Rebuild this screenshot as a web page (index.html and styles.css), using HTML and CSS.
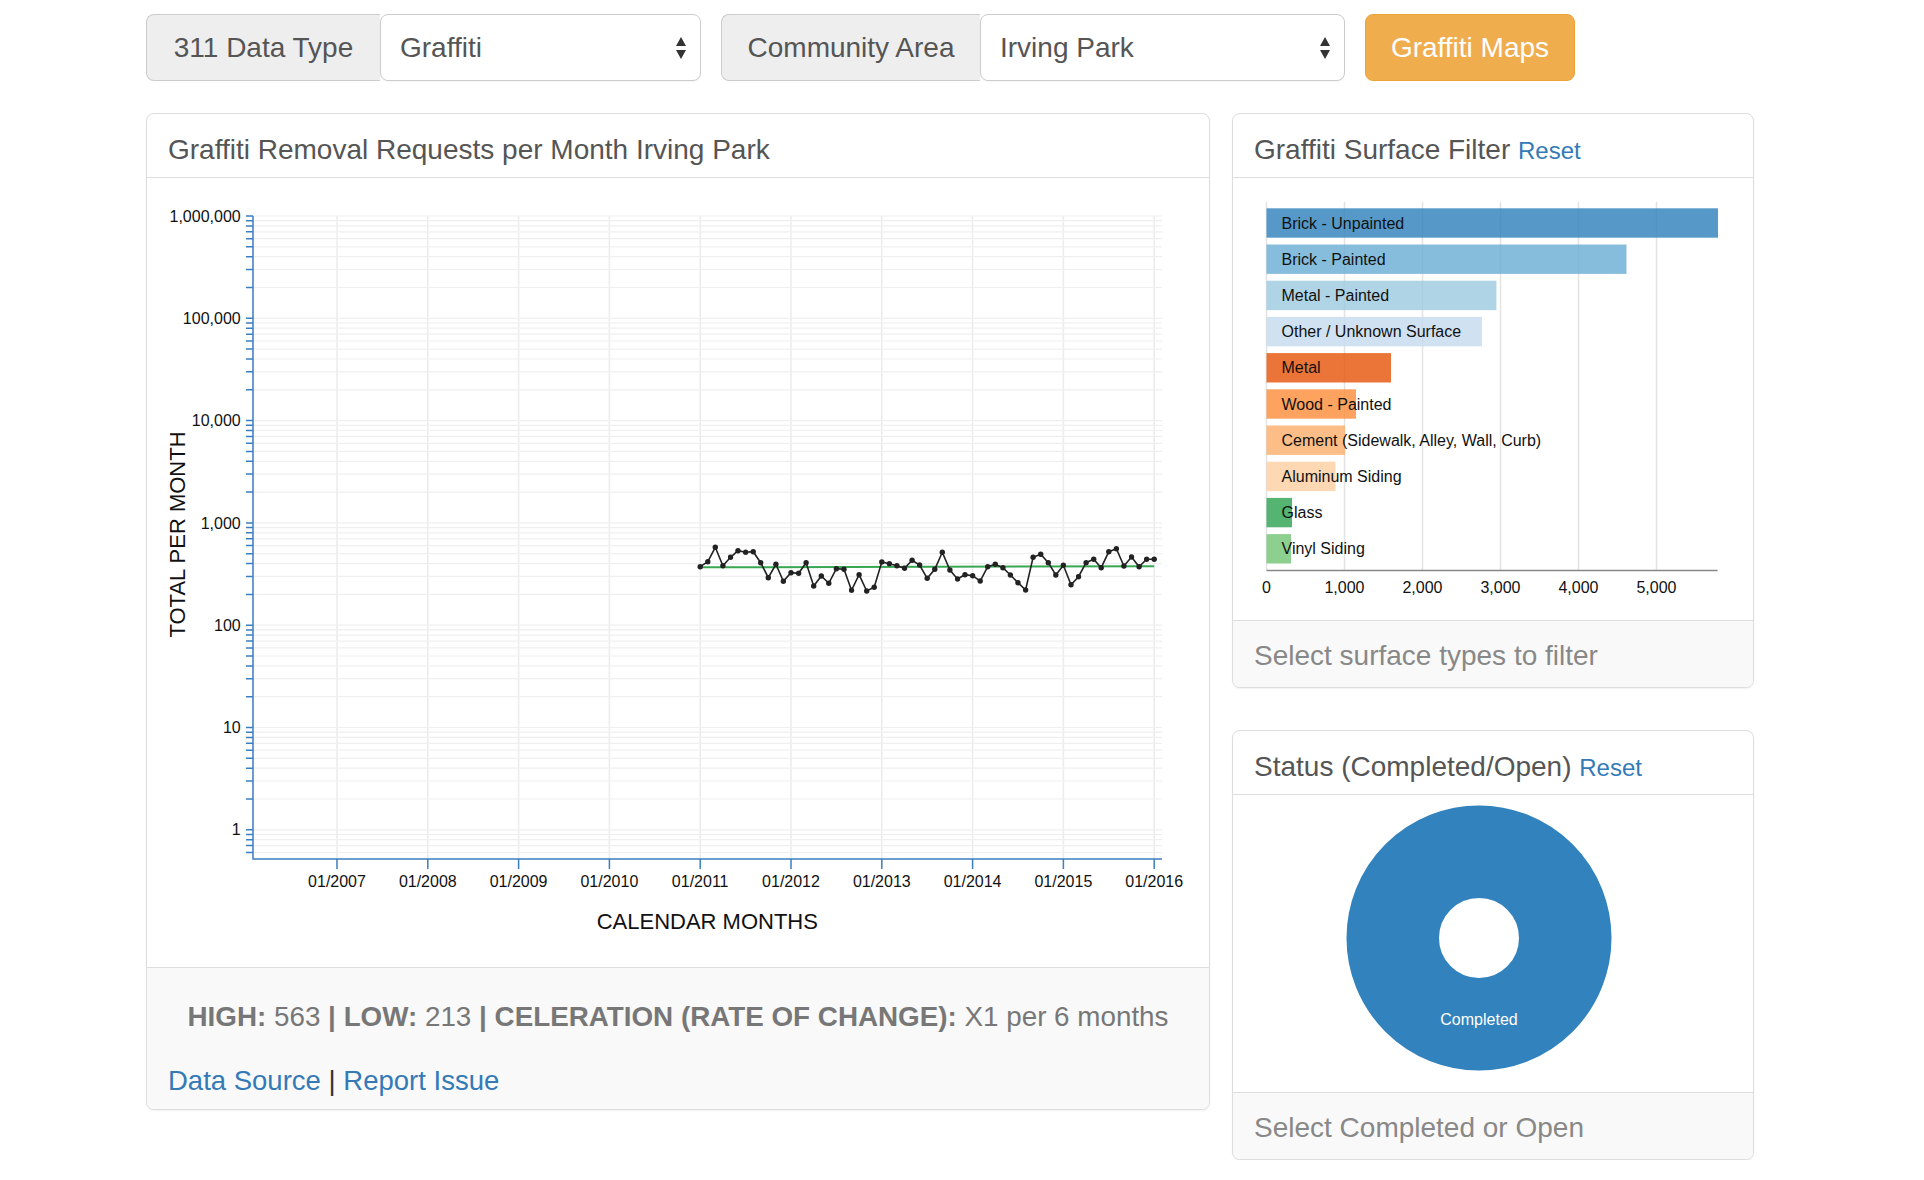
FILE: index.html
```html
<!DOCTYPE html>
<html lang="en">
<head>
<meta charset="utf-8">
<title>Graffiti Removal Requests</title>
<link rel="stylesheet" href="styles.css">
</head>
<body>
<div class="page">
  <div class="controls">
    <div class="input-group">
      <span class="addon addon-type">311 Data Type</span>
      <div class="select select-type">
        <span>Graffiti</span>
        <svg class="arrows" width="10" height="24" viewBox="0 0 10 24"><path d="M0 10L5 1L10 10Z M0 14L10 14L5 23Z"/></svg>
      </div>
    </div>
    <div class="input-group">
      <span class="addon addon-area">Community Area</span>
      <div class="select select-area">
        <span>Irving Park</span>
        <svg class="arrows" width="10" height="24" viewBox="0 0 10 24"><path d="M0 10L5 1L10 10Z M0 14L10 14L5 23Z"/></svg>
      </div>
    </div>
    <button class="btn-maps">Graffiti Maps</button>
  </div>

  <div class="row">
    <div class="col-main">
      <div class="panel panel-main">
        <div class="panel-heading">Graffiti Removal Requests per Month Irving Park</div>
        <div class="panel-body body-line">
          <svg class="chart" width="1062" height="789" viewBox="0 0 1062 789">
            <defs>
              <marker id="dot" viewBox="0 0 6 6" refX="3" refY="3" markerWidth="6" markerHeight="6" markerUnits="userSpaceOnUse">
                <circle cx="3" cy="3" r="2.7" fill="#222"/>
              </marker>
            </defs>
            <path class="grid-v" d="M190 38V681M280.8 38V681M371.6 38V681M462.4 38V681M553.2 38V681M644 38V681M734.8 38V681M825.6 38V681M916.4 38V681M1007.2 38V681"/>
            <path class="grid-h" d="M106 38H1015M106 42.7H1015M106 47.9H1015M106 53.85H1015M106 60.7H1015M106 68.8H1015M106 78.7H1015M106 91.5H1015M106 109.5H1015M106 140.3H1015M106 145H1015M106 150.2H1015M106 156.15H1015M106 163H1015M106 171.1H1015M106 181H1015M106 193.8H1015M106 211.8H1015M106 242.6H1015M106 247.3H1015M106 252.5H1015M106 258.45H1015M106 265.3H1015M106 273.4H1015M106 283.3H1015M106 296.1H1015M106 314.1H1015M106 344.9H1015M106 349.6H1015M106 354.8H1015M106 360.75H1015M106 367.6H1015M106 375.7H1015M106 385.6H1015M106 398.4H1015M106 416.4H1015M106 447.2H1015M106 451.9H1015M106 457.1H1015M106 463.05H1015M106 469.9H1015M106 478H1015M106 487.9H1015M106 500.7H1015M106 518.7H1015M106 549.5H1015M106 554.2H1015M106 559.4H1015M106 565.35H1015M106 572.2H1015M106 580.3H1015M106 590.2H1015M106 603H1015M106 621H1015M106 651.8H1015M106 656.5H1015M106 661.7H1015M106 667.6H1015M106 674.5H1015"/>
            <path class="axis" d="M106 38V681H1015"/>
            <path class="axis" d="M99 38H106M99 42.7H106M99 47.9H106M99 53.85H106M99 60.7H106M99 68.8H106M99 78.7H106M99 91.5H106M99 109.5H106M99 140.3H106M99 145H106M99 150.2H106M99 156.15H106M99 163H106M99 171.1H106M99 181H106M99 193.8H106M99 211.8H106M99 242.6H106M99 247.3H106M99 252.5H106M99 258.45H106M99 265.3H106M99 273.4H106M99 283.3H106M99 296.1H106M99 314.1H106M99 344.9H106M99 349.6H106M99 354.8H106M99 360.75H106M99 367.6H106M99 375.7H106M99 385.6H106M99 398.4H106M99 416.4H106M99 447.2H106M99 451.9H106M99 457.1H106M99 463.05H106M99 469.9H106M99 478H106M99 487.9H106M99 500.7H106M99 518.7H106M99 549.5H106M99 554.2H106M99 559.4H106M99 565.35H106M99 572.2H106M99 580.3H106M99 590.2H106M99 603H106M99 621H106M99 651.8H106M99 656.5H106M99 661.7H106M99 667.6H106M99 674.5H106"/>
            <path class="axis" d="M190 681V691M280.8 681V691M371.6 681V691M462.4 681V691M553.2 681V691M644 681V691M734.8 681V691M825.6 681V691M916.4 681V691M1007.2 681V691"/>
            <g class="tick-y">
              <text x="93.7" y="43.6">1,000,000</text>
              <text x="93.7" y="145.9">100,000</text>
              <text x="93.7" y="248.2">10,000</text>
              <text x="93.7" y="350.5">1,000</text>
              <text x="93.7" y="452.8">100</text>
              <text x="93.7" y="555.1">10</text>
              <text x="93.7" y="657.4">1</text>
            </g>
            <g class="tick-x">
              <text x="190" y="708.5">01/2007</text>
              <text x="280.8" y="708.5">01/2008</text>
              <text x="371.6" y="708.5">01/2009</text>
              <text x="462.4" y="708.5">01/2010</text>
              <text x="553.2" y="708.5">01/2011</text>
              <text x="644" y="708.5">01/2012</text>
              <text x="734.8" y="708.5">01/2013</text>
              <text x="825.6" y="708.5">01/2014</text>
              <text x="916.4" y="708.5">01/2015</text>
              <text x="1007.2" y="708.5">01/2016</text>
            </g>
            <text class="axis-title" x="560.3" y="751">CALENDAR MONTHS</text>
            <text class="axis-title" transform="translate(38 356.5) rotate(-90)">TOTAL PER MONTH</text>
            <path class="trend" d="M553.2 389.3L1007.2 388.3"/>
            <polyline class="series" points="553.2,388.7 560.8,383.7 568.3,369.3 575.9,387.7 583.5,379.3 591,372.7 598.6,374.3 606.2,373.7 613.7,384.7 621.3,399.7 628.9,386.3 636.4,403.3 644,394.7 651.6,395.3 659.1,384.7 666.7,408 674.3,398 681.8,405.3 689.4,390.7 697,391.3 704.5,412.3 712.1,396.7 719.7,413 727.2,409.3 734.8,384 742.4,385.7 749.9,387.7 757.5,390.3 765.1,382.3 772.6,387 780.2,400.3 787.8,391.3 795.3,374.3 802.9,392 810.5,401 818,396.7 825.6,397.7 833.2,403 840.7,388.7 848.3,386.3 855.9,389.7 863.4,397 871,404.7 878.6,412 886.1,379.3 893.7,376.3 901.3,384.7 908.8,397 916.4,387.3 924,406.7 931.5,398.7 939.1,384.7 946.7,381.3 954.2,389.7 961.8,373.7 969.4,370.7 976.9,388 984.5,379 992.1,388.7 999.6,381.3 1007.2,381.3"/>
          </svg>
        </div>
        <div class="panel-footer footer-main">
          <div class="stats"><b>HIGH:</b> 563 <b>|</b> <b>LOW:</b> 213 <b>|</b> <b>CELERATION (RATE OF CHANGE):</b> X1 per 6 months</div>
          <div class="links"><a href="#">Data Source</a> | <a href="#">Report Issue</a></div>
        </div>
      </div>
    </div>

    <div class="col-side">
      <div class="panel panel-surface">
        <div class="panel-heading">Graffiti Surface Filter&nbsp;<a class="reset" href="#">Reset</a></div>
        <div class="panel-body body-bars">
          <svg class="chart" width="520" height="442" viewBox="0 0 520 442">
            <path class="bar-grid" d="M33.5 23.7V392M111.5 23.7V392M189.5 23.7V392M267.5 23.7V392M345.5 23.7V392M423.5 23.7V392"/>
            <g class="bars">
              <rect x="33.5" y="30.3" width="451.5" height="29.4" fill="#3182bd"/>
              <rect x="33.5" y="66.5" width="360" height="29.4" fill="#6baed6"/>
              <rect x="33.5" y="102.7" width="229.9" height="29.4" fill="#9ecae1"/>
              <rect x="33.5" y="138.9" width="215.5" height="29.4" fill="#c6dbef"/>
              <rect x="33.5" y="175.1" width="124.5" height="29.4" fill="#e6550d"/>
              <rect x="33.5" y="211.3" width="89.5" height="29.4" fill="#fd8d3c"/>
              <rect x="33.5" y="247.5" width="78.5" height="29.4" fill="#fdae6b"/>
              <rect x="33.5" y="283.7" width="68.9" height="29.4" fill="#fdd0a2"/>
              <rect x="33.5" y="319.9" width="25.5" height="29.4" fill="#31a354"/>
              <rect x="33.5" y="356.1" width="24.5" height="29.4" fill="#74c476"/>
            </g>
            <g class="bar-labels">
              <text x="48.5" y="50.5">Brick - Unpainted</text>
              <text x="48.5" y="86.7">Brick - Painted</text>
              <text x="48.5" y="122.9">Metal - Painted</text>
              <text x="48.5" y="159.1">Other / Unknown Surface</text>
              <text x="48.5" y="195.3">Metal</text>
              <text x="48.5" y="231.5">Wood - Painted</text>
              <text x="48.5" y="267.7">Cement (Sidewalk, Alley, Wall, Curb)</text>
              <text x="48.5" y="303.9">Aluminum Siding</text>
              <text x="48.5" y="340.1">Glass</text>
              <text x="48.5" y="376.3">Vinyl Siding</text>
            </g>
            <path class="bar-axis" d="M33.5 392.5H484.6"/>
            <g class="tick-x">
              <text x="33.5" y="415">0</text>
              <text x="111.5" y="415">1,000</text>
              <text x="189.5" y="415">2,000</text>
              <text x="267.5" y="415">3,000</text>
              <text x="345.5" y="415">4,000</text>
              <text x="423.5" y="415">5,000</text>
            </g>
          </svg>
        </div>
        <div class="panel-footer footer-side">Select surface types to filter</div>
      </div>

      <div class="panel panel-status">
        <div class="panel-heading">Status (Completed/Open)&nbsp;<a class="reset" href="#">Reset</a></div>
        <div class="panel-body body-donut">
          <svg class="chart" width="520" height="297" viewBox="0 0 520 297">
            <circle cx="246" cy="143" r="86.25" fill="none" stroke="#3182bd" stroke-width="92.5"/>
            <text class="donut-label" x="246" y="229.5">Completed</text>
          </svg>
        </div>
        <div class="panel-footer footer-side">Select Completed or Open</div>
      </div>
    </div>
  </div>
</div>
</body>
</html>
```

FILE: styles.css
```css
html, body {
  margin: 0;
  padding: 0;
  background: #fff;
}

body {
  font-family: "Liberation Sans", Arial, Helvetica, sans-serif;
  color: #333;
}

a {
  color: #337ab7;
  text-decoration: none;
}

.page {
  padding: 14px 0 0 146px;
  width: 1610px;
}

/* ---------- top controls ---------- */
.controls {
  display: flex;
  gap: 20px;
  height: 67px;
}

.input-group {
  display: flex;
  height: 67px;
}

.addon {
  box-sizing: border-box;
  display: flex;
  align-items: center;
  justify-content: center;
  padding: 0;
  background: #eee;
  border: 1px solid #ccc;
  border-right: 0;
  border-radius: 8px 0 0 8px;
  font-size: 28px;
  color: #555;
  white-space: nowrap;
}

.addon-type { width: 234px; }
.addon-area { width: 259px; }

.select {
  box-sizing: border-box;
  display: flex;
  align-items: center;
  justify-content: space-between;
  padding: 0 14px 0 19px;
  background: #fff;
  border: 1px solid #ccc;
  border-radius: 8px;
  font-size: 28px;
  color: #555;
  box-shadow: 0 1px 1px rgba(0, 0, 0, 0.04);
}

.select-type { width: 321px; }
.select-area { width: 365px; }

.arrows {
  display: block;
  fill: #333;
}

.btn-maps {
  box-sizing: border-box;
  width: 210px;
  height: 67px;
  padding: 0;
  background: #f0ad4e;
  border: 1px solid #eea236;
  border-radius: 8px;
  color: #fff;
  font-family: inherit;
  font-size: 28px;
}

/* ---------- layout ---------- */
.row {
  display: flex;
  gap: 22px;
  margin-top: 32px;
  align-items: flex-start;
}

.col-main { width: 1064px; }

.col-side {
  width: 522px;
  display: flex;
  flex-direction: column;
  gap: 42px;
}

/* ---------- panels ---------- */
.panel {
  background: #fff;
  border: 1px solid #ddd;
  border-radius: 8px;
  box-shadow: 0 1px 2px rgba(0, 0, 0, 0.06);
  overflow: hidden;
}

.panel-heading {
  box-sizing: border-box;
  height: 64px;
  padding: 8px 21px 0;
  display: flex;
  align-items: center;
  border-bottom: 1px solid #ddd;
  font-size: 28px;
  color: #555;
  white-space: nowrap;
}

.panel-heading .reset {
  font-size: 24px;
  align-self: center;
  padding-top: 3px;
}

.panel-body { display: block; }

.chart {
  display: block;
  font-family: "Liberation Sans", Arial, Helvetica, sans-serif;
}

.body-line { height: 789px; }
.body-bars { height: 442px; }
.body-donut { height: 297px; }

.panel-footer {
  box-sizing: border-box;
  background: #f9f9f9;
  border-top: 1px solid #ddd;
}

.footer-main {
  height: 142px;
  padding: 29px 21px 0;
}

.stats {
  text-align: center;
  font-size: 27.8px;
  line-height: 40px;
  color: #777;
  white-space: nowrap;
}

.stats b { color: #777; }

.links {
  margin-top: 24px;
  font-size: 27.5px;
  line-height: 40px;
  color: #333;
}

.footer-side {
  height: 67px;
  padding: 3px 21px 0;
  display: flex;
  align-items: center;
  font-size: 28px;
  color: #888;
}

/* ---------- chart pieces ---------- */
.grid-v {
  fill: none;
  stroke: #ececec;
  stroke-width: 1.5;
}

.grid-h {
  fill: none;
  stroke: #efefef;
  stroke-width: 1.2;
}

.axis {
  fill: none;
  stroke: #3b7fc0;
  stroke-width: 1.5;
}

.tick-y text {
  font-size: 16px;
  text-anchor: end;
  fill: #111;
}

.tick-x text {
  font-size: 16px;
  text-anchor: middle;
  fill: #111;
}

.axis-title {
  font-size: 22px;
  text-anchor: middle;
  fill: #111;
}

.trend {
  fill: none;
  stroke: #38a752;
  stroke-width: 2;
}

.series {
  fill: none;
  stroke: #222;
  stroke-width: 1.6;
  marker-start: url(#dot);
  marker-mid: url(#dot);
  marker-end: url(#dot);
}

.bar-grid {
  fill: none;
  stroke: #e3e3e3;
  stroke-width: 1.5;
}

.bars rect { fill-opacity: 0.82; }

.bar-labels text {
  font-size: 16px;
  fill: #111;
}

.bar-axis {
  fill: none;
  stroke: #888;
  stroke-width: 1.5;
}

.donut-label {
  font-size: 16px;
  text-anchor: middle;
  fill: #fff;
}
```
